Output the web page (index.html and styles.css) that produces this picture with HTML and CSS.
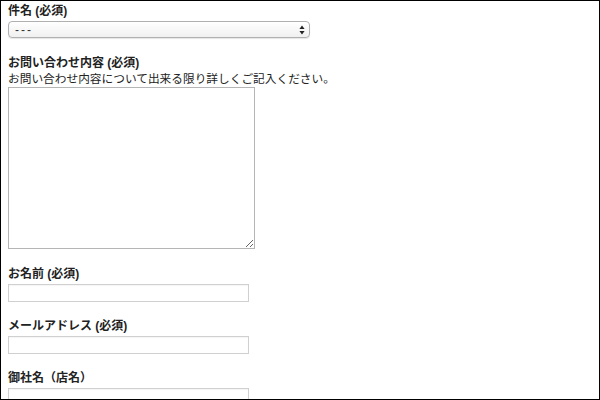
FILE: index.html
```html
<!DOCTYPE html>
<html lang="ja">
<head>
<meta charset="utf-8">
<link rel="stylesheet" href="styles.css">
</head>
<body>
<div class="frame">
  <form class="form">
    <div class="field">
      <label class="label">件名 (必須)</label>
      <div class="select-wrap">
        <select class="select"><option>---</option></select>
        <svg class="select-arrows" width="6" height="10" viewBox="0 0 6 10"><path d="M3 0.5 L5.6 4 L0.4 4 Z M3 9.5 L5.6 6 L0.4 6 Z" fill="#222"/></svg>
      </div>
    </div>
    <div class="field">
      <label class="label">お問い合わせ内容 (必須)</label>
      <div class="hint">お問い合わせ内容について出来る限り詳しくご記入ください。</div>
      <textarea class="textarea"></textarea>
    </div>
    <div class="field field-input">
      <label class="label">お名前 (必須)</label>
      <input class="input" type="text">
    </div>
    <div class="field field-input">
      <label class="label">メールアドレス (必須)</label>
      <input class="input" type="text">
    </div>
    <div class="field field-input">
      <label class="label">御社名（店名）</label>
      <input class="input" type="text">
    </div>
  </form>
</div>
</body>
</html>
```
FILE: styles.css
```css
html, body {
  margin: 0;
  padding: 0;
  background: #fff;
}
.frame {
  box-sizing: border-box;
  width: 600px;
  height: 400px;
  border: 1px solid #000;
  overflow: hidden;
  padding: 3px 0 0 7px;
  font-family: "Liberation Sans", "Noto Sans CJK JP", sans-serif;
  font-size: 12px;
  line-height: 15px;
  color: #222;
}
.form {
  display: flex;
  flex-direction: column;
}
.field {
  display: flex;
  flex-direction: column;
  align-items: flex-start;
  margin-bottom: 18px;
}
.field-input {
  margin-bottom: 17px;
}
.label {
  display: block;
  font-weight: bold;
  margin-bottom: 2px;
}
.hint {
  margin-top: -2px;
  margin-bottom: 1px;
  font-size: 11.7px;
}
.select-wrap {
  position: relative;
  width: 302px;
  height: 17px;
}
.select {
  appearance: none;
  -webkit-appearance: none;
  box-sizing: border-box;
  width: 302px;
  height: 17px;
  margin: 0;
  padding: 0 0 0 6px;
  border: 1px solid #b0b0b0;
  border-radius: 4px;
  background: linear-gradient(#ffffff, #f0f0f0);
  box-shadow: 0 1px 1px rgba(0,0,0,0.1);
  font-family: "Liberation Sans", sans-serif;
  font-size: 12px;
  letter-spacing: 2px;
  color: #333;
}
.select-arrows {
  position: absolute;
  right: 5px;
  top: 3.5px;
}
.textarea {
  box-sizing: border-box;
  width: 247px;
  height: 162px;
  margin: 0;
  border: 1px solid #b5b5b5;
  padding: 2px;
  font-family: inherit;
  font-size: 12px;
  background: #fff;
}
.input {
  box-sizing: border-box;
  width: 241px;
  height: 18px;
  margin: 0;
  padding: 1px 3px;
  border: 1px solid #d0d0d0;
  box-shadow: inset 0 1px 1px rgba(0,0,0,0.04);
  background: #fff;
  font-family: inherit;
  font-size: 12px;
}
```
